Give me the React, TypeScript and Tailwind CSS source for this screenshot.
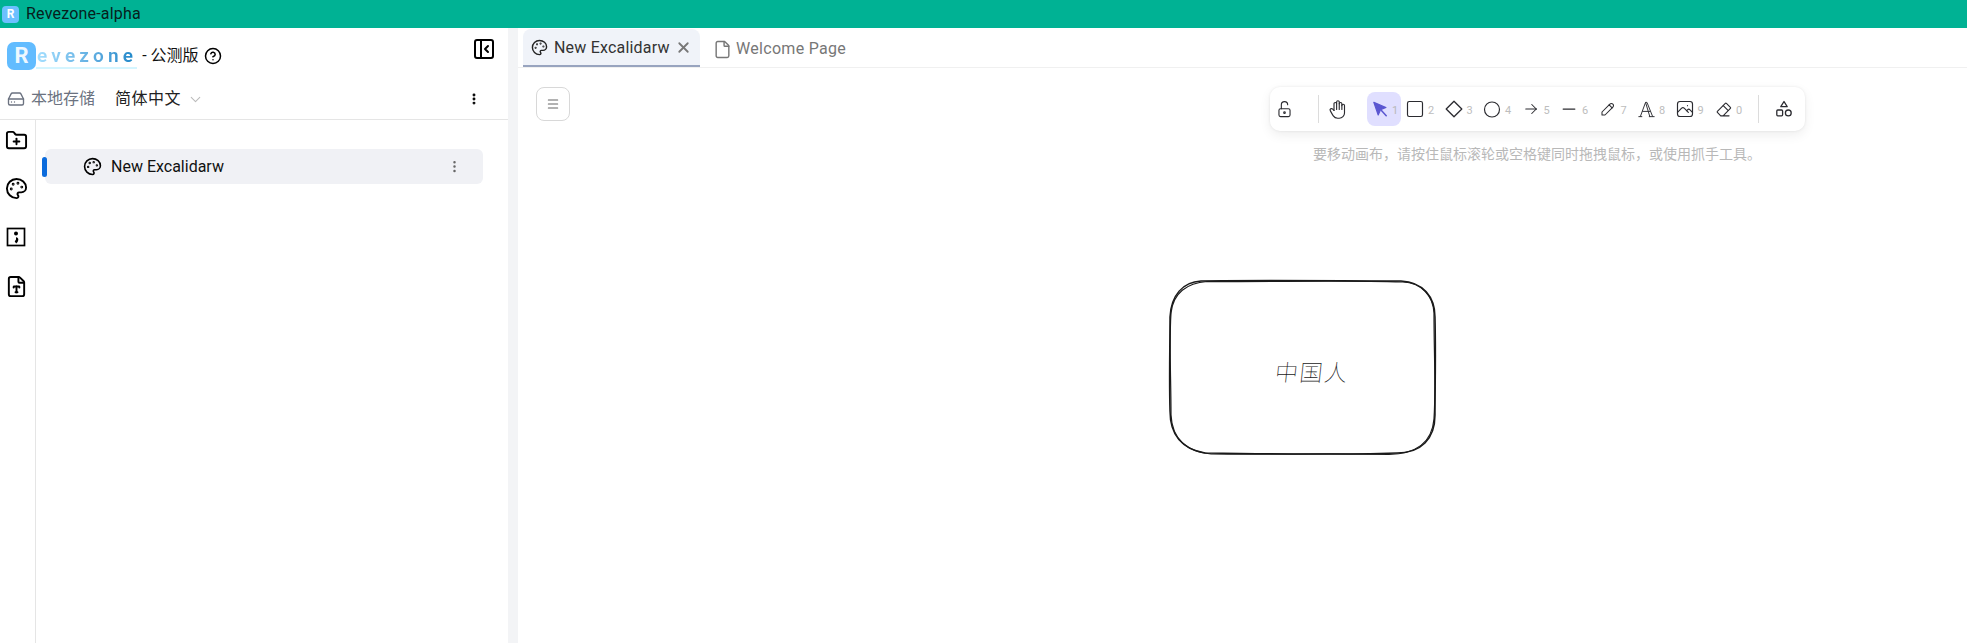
import React from "react";
import {
  CircleHelp,
  EllipsisVertical,
  File,
  FileType,
  FolderPlus,
  HardDrive,
  Menu,
  Palette,
  PanelLeftClose,
  ChevronDown,
  X,
} from "lucide-react";
import {
  TbArrowRight,
  TbCircle,
  TbEraser,
  TbHandStop,
  TbLockOpen,
  TbMinus,
  TbPencil,
  TbPhoto,
  TbSquare,
} from "react-icons/tb";

const FONT = "font-['Roboto','Noto_Sans_CJK_SC',sans-serif]";

const SelectionIcon = () => (
  <svg viewBox="0 0 22 22" className="h-[21px] w-[21px] text-[#5b57d1]" fill="currentColor" stroke="currentColor" strokeWidth="1.25" strokeLinecap="round" strokeLinejoin="round">
    <path d="M4 3.5l4.6 13.2 2.5-5.6 5.6-2.2z" />
    <path d="M12 12l5 5.5" fill="none" strokeWidth="1.6" />
  </svg>
);

const DiamondIcon = () => (
  <svg viewBox="0 0 20 20" className="h-[20px] w-[20px]" fill="none" stroke="currentColor" strokeWidth="1.3" strokeLinejoin="round">
    <path d="M10 2.2L17.800 10 10 17.800 2.200 10z" />
  </svg>
);

const TextIcon = () => (
  <svg viewBox="0 0 20 20" className="h-[19px] w-[19px]" fill="none" stroke="currentColor" strokeWidth="1" strokeLinejoin="round">
    <path d="M1.5 17.5h4M12.5 17.5h6M3.5 17.5L9 2.5h1.5l6 15" />
    <path d="M9 2.5l4.5 15M5.5 12h8.5" />
  </svg>
);

const ShapesIcon = () => (
  <svg viewBox="0 0 20 20" className="h-[20px] w-[20px]" fill="none" stroke="currentColor" strokeWidth="1.3" strokeLinejoin="round">
    <path d="M10 2.5l3.2 5.2H6.800z" />
    <rect x="2.800" y="11" width="5.800" height="5.800" rx="1" />
    <circle cx="14.300" cy="13.900" r="2.900" />
  </svg>
);

const SemicolonSquare = () => (
  <svg viewBox="0 0 20 20" className="h-[20px] w-[20px] text-black" fill="none" stroke="currentColor" strokeWidth="1.700">
    <rect x="1.500" y="1.500" width="17" height="17" />
    <circle cx="10" cy="6.500" r="2" fill="currentColor" stroke="none" />
    <path d="M10 11.500c1.500 0 1.400 2.600-.6 3.900" strokeWidth="2.600" />
  </svg>
);

const tools: { icon: React.ReactNode; key: string }[] = [
  { icon: <TbSquare className="h-[20px] w-[20px]" strokeWidth={1.4} />, key: "2" },
  { icon: <DiamondIcon />, key: "3" },
  { icon: <TbCircle className="h-[21px] w-[21px]" strokeWidth={1.4} />, key: "4" },
  { icon: <TbArrowRight className="h-[18px] w-[18px]" strokeWidth={1.4} />, key: "5" },
  { icon: <TbMinus className="h-[20px] w-[20px]" strokeWidth={1.5} />, key: "6" },
  { icon: <TbPencil className="h-[18px] w-[18px]" strokeWidth={1.4} />, key: "7" },
  { icon: <TextIcon />, key: "8" },
  { icon: <TbPhoto className="h-[20px] w-[20px]" strokeWidth={1.4} />, key: "9" },
  { icon: <TbEraser className="h-[19px] w-[19px]" strokeWidth={1.4} />, key: "0" },
];

const Toolbar = () => (
  <div className="flex h-[44px] w-[535px] items-center rounded-[10px] bg-white pl-[5px] text-[#2b2b30] shadow-[0_0_3px_rgba(0,0,0,0.08),0_4px_12px_rgba(0,0,0,0.07)]">
    <TbLockOpen className="h-[19px] w-[19px]" strokeWidth={1.4} />
    <div className="ml-[24px] h-[28px] w-px bg-[#dcdcdc]" />
    <TbHandStop className="ml-[8px] h-[21px] w-[21px]" strokeWidth={1.3} />
    <div className="ml-[19px] flex h-[34px] w-[34px] items-center justify-center gap-[1px] rounded-[8px] bg-[#e0dfff]">
      <SelectionIcon />
      <span className="mt-[4px] text-[11px] text-[#b8b8b8]">1</span>
    </div>
    <div className="ml-[4px] flex">
      {tools.map((t) => (
        <div key={t.key} className="flex w-[38.500px] items-center">
          <div className="flex h-[22px] w-[20px] items-center justify-center">{t.icon}</div>
          <span className="ml-[3px] mt-[4px] text-[11px] text-[#bdbdbd]">{t.key}</span>
        </div>
      ))}
    </div>
    <div className="ml-[6px] h-[28px] w-px bg-[#dcdcdc]" />
    <div className="ml-[15px]">
      <ShapesIcon />
    </div>
  </div>
);

export default function App() {
  return (
    <div className={`flex h-[643px] w-[1967px] flex-col overflow-hidden bg-white text-black ${FONT}`}>
      <div className="flex h-[28px] shrink-0 items-center bg-[#00b294] pl-[2px]">
        <div className="flex h-[17px] w-[17px] items-center justify-center rounded-[4px] bg-[#6cc0ff] text-[12px] font-bold leading-none text-white">R</div>
        <span className="ml-[7px] text-[16px] tracking-[0.2px] text-[#07201c]">Revezone-alpha</span>
      </div>

      <div className="flex min-h-0 flex-1">
        <aside className="flex w-[508px] shrink-0 flex-col">
          <div className="relative h-[92px] shrink-0 border-b border-[#e5e5e5]">
            <div className="flex items-center pl-[7px] pt-[14px]">
              <div className="flex h-[28px] w-[29px] items-center justify-center rounded-[7px] bg-[#62bcff] text-[22px] font-bold leading-none text-[#eef8ff]">R</div>
              <span className="mt-[2px] border-b-[2px] border-[#d4f5ff] bg-gradient-to-r from-[#a6e0ff] to-[#1886c8] bg-clip-text pl-[1px] text-[19px] font-semibold leading-[22px] tracking-[4.200px] text-transparent">evezone</span>
              <span className="ml-[5px] text-[16px] text-[#111]">- 公测版</span>
              <CircleHelp className="ml-[5px] h-[18px] w-[18px]" strokeWidth={2} />
            </div>
            <PanelLeftClose className="absolute left-[472px] top-[9px] h-[24px] w-[24px]" strokeWidth={2} />
            <div className="mt-[17px] flex items-center pl-[7px]">
              <HardDrive className="h-[18px] w-[18px] text-[#6b7280]" strokeWidth={1.8} />
              <span className="ml-[6px] text-[16px] text-[#6b7280]">本地存储</span>
              <span className="ml-[20px] text-[16px] tracking-[0.5px] text-[#222]">简体中文</span>
              <ChevronDown className="ml-[6px] h-[17px] w-[17px] text-[#bbb]" strokeWidth={1.500} />
              <EllipsisVertical className="ml-auto mr-[27px] h-[14px] w-[14px]" strokeWidth={3} />
            </div>
          </div>

          <div className="flex min-h-0 flex-1">
            <div className="flex w-[36px] shrink-0 flex-col items-center gap-[26px] border-r border-[#e5e5e5] pr-[3px] pt-[9px]">
              <FolderPlus className="h-[23px] w-[23px]" strokeWidth={2} />
              <Palette className="h-[23px] w-[23px] -translate-y-[1px]" strokeWidth={2} />
              <SemicolonSquare />
              <FileType className="h-[23px] w-[23px] translate-y-[2px]" strokeWidth={2} />
            </div>
            <div className="relative min-w-0 flex-1 pl-[9px] pr-[25px] pt-[29px]">
              <div className="absolute left-[6px] top-[37px] h-[20px] w-[5px] rounded-full bg-[#0b6bdc]" />
              <div className="flex h-[35px] items-center rounded-[6px] bg-[#f0f1f5] pl-[38px] pr-[21px]">
                <Palette className="h-[19px] w-[19px]" strokeWidth={2} />
                <span className="ml-[9px] text-[16px] text-[#111]">New Excalidarw</span>
                <EllipsisVertical className="ml-auto h-[15px] w-[15px] text-[#666]" strokeWidth={2} />
              </div>
            </div>
          </div>
        </aside>

        <div className="w-[10px] shrink-0 bg-[#f3f4f6]" />

        <main className="flex min-w-0 flex-1 flex-col">
          <div className="flex h-[40px] shrink-0 items-end border-b border-[#f0f0f0] pl-[5px] pt-[2px]">
            <div className="flex h-[38px] w-[177px] items-center rounded-t-[8px] border-b-[2px] border-[#98a4bf] bg-[#f0f3f9] pl-[8px] pt-[1px]">
              <Palette className="h-[17px] w-[17px] text-[#222]" strokeWidth={2} />
              <span className="ml-[6px] text-[16px] tracking-[0.2px] text-[#333]">New Excalidarw</span>
              <X className="ml-[5px] h-[17px] w-[17px] text-[#777]" strokeWidth={2.500} />
            </div>
            <div className="flex h-[38px] items-center pl-[13px] pt-[2px]">
              <File className="h-[19px] w-[19px] text-[#777]" strokeWidth={1.800} />
              <span className="ml-[4px] text-[16px] tracking-[0.3px] text-[#777]">Welcome Page</span>
            </div>
          </div>

          <div className="relative min-h-0 flex-1">
            <div className="flex items-start pl-[18px] pt-[19px]">
              <button className="flex h-[34px] w-[34px] items-center justify-center rounded-[8px] border border-[#d8d8d8] bg-white text-[#666]">
                <Menu className="h-[14px] w-[14px]" strokeWidth={1.800} />
              </button>
              <div className="ml-[700px] flex flex-col items-center">
                <Toolbar />
                <p className="mt-[13px] pr-[1px] text-[14px] text-[#b8b8b8]">要移动画布，请按住鼠标滚轮或空格键同时拖拽鼠标，或使用抓手工具。</p>
              </div>
            </div>

            <svg viewBox="0 0 275 182" className="absolute left-[647px] top-[209px] h-[182px] w-[275px] text-[#1a1a1a]" fill="none" stroke="currentColor" strokeLinecap="round">
              <path d="M36 4C100 3 180 4 236 4 C258 5 270 20 270 40 C271 80 270 110 270 138 C270 162 256 176 232 176 C170 178 100 177 40 176 C18 172 5 160 5 134 C4 100 5 70 5 40 C6 18 18 5 36 4Z" strokeWidth="1.500" />
              <path d="M42 4.500C110 5 170 3 238 5 C256 6 268 18 269 36 C269 76 271 112 269 142 C267 166 250 177 224 177.500 C160 176 100 178 46 177 C22 175 7 162 6 138 C6 100 4 66 6 36 C8 16 22 6 42 4.500Z" strokeWidth="1.200" />
            </svg>
            <div className="absolute left-[757px] top-[289px] -skew-x-6 text-[23px] font-thin leading-[34px] tracking-[1.500px] text-[#222]">中国人</div>
          </div>
        </main>
      </div>
    </div>
  );
}
